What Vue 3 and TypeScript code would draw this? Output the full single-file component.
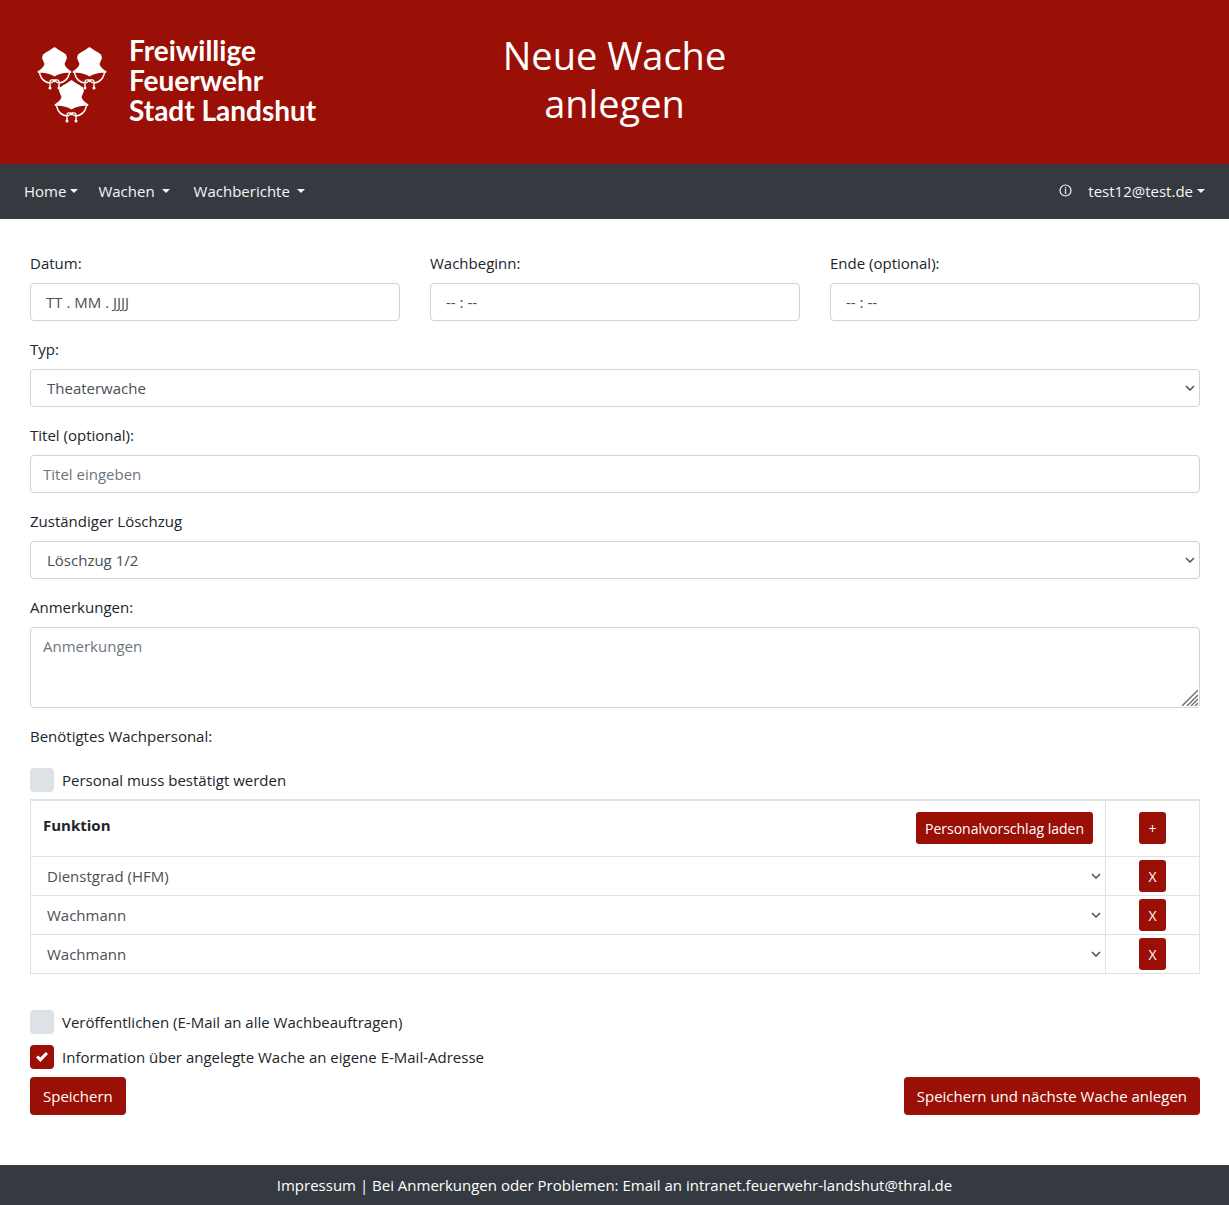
<script setup lang="ts">
import { reactive, ref } from 'vue'

interface NavEntry {
  label: string
  spaced: boolean
}

const navEntries: NavEntry[] = [
  { label: 'Home', spaced: false },
  { label: 'Wachen', spaced: true },
  { label: 'Wachberichte', spaced: true },
]

const types = ['Theaterwache', 'Brandwache', 'Sonstige']
const units = ['Löschzug 1/2', 'Löschzug 3', 'Löschzug 4']
const roles = ['Dienstgrad (HFM)', 'Wachmann']

const form = reactive({
  date: '',
  start: '',
  end: '',
  type: types[0],
  title: '',
  unit: units[0],
  notes: '',
  confirm: false,
  publish: false,
  inform: true,
})

const staff = ref<string[]>(['Dienstgrad (HFM)', 'Wachmann', 'Wachmann'])

function addRow() {
  staff.value.push('Wachmann')
}
function removeRow(index: number) {
  staff.value.splice(index, 1)
}
function loadProposal() {
  staff.value = ['Dienstgrad (HFM)', 'Wachmann', 'Wachmann']
}
</script>

<template>
  <div class="page">
    <header class="banner">
      <div class="brand">
        <svg class="emblem" width="70" height="78" viewBox="0 0 70 78" aria-hidden="true">
          <defs>
            <g id="helmet">
              <path
                d="M16.500 0 C19 2 24 4.500 28 7.500 L29 11 L26.500 17 C27 20 30 22 33.500 24.500 L33 26 Q24 25 16.500 29.500 Q9 25 0 26 L-0.500 24.500 C3 22 6 20 6.500 17 L4 11 L5 7.500 C9 4.500 14 2 16.500 0 Z"
                fill="#fff"
              />
              <path
                d="M1.500 26 C3 32 7 35.500 12 36 M31.500 26 C30 32 26 35.500 21 36 M12 41 V35 C12 32.500 15 32 16.500 34.500 C18 32 21 32.500 21 35 V41 M13 36 L18 32.500 M20 36 L15 32.500"
                fill="none"
                stroke="#fff"
                stroke-width="1.400"
              />
              <circle cx="12" cy="41" r="1.500" fill="#fff" />
              <circle cx="21" cy="41" r="1.500" fill="#fff" />
            </g>
          </defs>
          <use href="#helmet" x="1" y="1" />
          <use href="#helmet" x="36" y="1" />
          <use href="#helmet" x="18" y="34" />
        </svg>
        <div class="brand-name">
          <span>Freiwillige</span>
          <span>Feuerwehr</span>
          <span>Stadt Landshut</span>
        </div>
      </div>
      <h1>Neue Wache anlegen</h1>
      <div></div>
    </header>

    <nav class="navbar">
      <div class="nav-main">
        <a v-for="entry in navEntries" :key="entry.label" href="#" :class="{ spaced: entry.spaced }">
          {{ entry.label }}<i class="caret"></i>
        </a>
      </div>
      <div class="nav-user">
        <a href="#" class="info" aria-label="Info">
          <svg width="13" height="13" viewBox="0 0 13 13" fill="none" stroke="currentColor">
            <circle cx="6.500" cy="6.500" r="5.500" stroke-width="1.200" />
            <path d="M6.500 3 V4.200 M6.500 5 V10" stroke-width="1.200" />
          </svg>
        </a>
        <a href="#">test12@test.de<i class="caret"></i></a>
      </div>
    </nav>

    <main>
      <form @submit.prevent>
        <div class="columns">
          <div class="group">
            <label for="date">Datum:</label>
            <input id="date" v-model="form.date" class="control time" type="text" placeholder="TT . MM . JJJJ" />
          </div>
          <div class="group">
            <label for="start">Wachbeginn:</label>
            <input id="start" v-model="form.start" class="control time" type="text" placeholder="-- : --" />
          </div>
          <div class="group">
            <label for="end">Ende (optional):</label>
            <input id="end" v-model="form.end" class="control time" type="text" placeholder="-- : --" />
          </div>
        </div>

        <div class="group">
          <label for="type">Typ:</label>
          <select id="type" v-model="form.type" class="control">
            <option v-for="t in types" :key="t">{{ t }}</option>
          </select>
        </div>

        <div class="group">
          <label for="title">Titel (optional):</label>
          <input id="title" v-model="form.title" class="control" type="text" placeholder="Titel eingeben" />
        </div>

        <div class="group">
          <label for="unit">Zuständiger Löschzug</label>
          <select id="unit" v-model="form.unit" class="control">
            <option v-for="u in units" :key="u">{{ u }}</option>
          </select>
        </div>

        <div class="group">
          <label for="notes">Anmerkungen:</label>
          <div class="notes">
            <textarea id="notes" v-model="form.notes" class="control" placeholder="Anmerkungen"></textarea>
            <svg class="grip" width="16" height="16" viewBox="0 0 16 16" aria-hidden="true">
              <path d="M0 16 L16 0 M5 16 L16 5 M9 16 L16 9 M13 16 L16 13" stroke="#6b6b6b" stroke-width="1.400" />
            </svg>
          </div>
        </div>

        <p class="caption">Benötigtes Wachpersonal:</p>

        <label class="check">
          <input v-model="form.confirm" type="checkbox" />
          <span>Personal muss bestätigt werden</span>
        </label>

        <table>
          <thead>
            <tr>
              <th>
                <div class="head">
                  <span>Funktion</span>
                  <button type="button" class="btn small" @click="loadProposal">Personalvorschlag laden</button>
                </div>
              </th>
              <th class="action">
                <button type="button" class="btn small" @click="addRow">+</button>
              </th>
            </tr>
          </thead>
          <tbody>
            <tr v-for="(role, i) in staff" :key="i">
              <td>
                <select v-model="staff[i]" class="control plain" aria-label="Funktion">
                  <option v-for="r in roles" :key="r">{{ r }}</option>
                </select>
              </td>
              <td class="action">
                <button type="button" class="btn small" @click="removeRow(i)">X</button>
              </td>
            </tr>
          </tbody>
        </table>

        <div class="options">
          <label class="check">
            <input v-model="form.publish" type="checkbox" />
            <span>Veröffentlichen (E-Mail an alle Wachbeauftragen)</span>
          </label>
          <label class="check">
            <input v-model="form.inform" type="checkbox" />
            <span>Information über angelegte Wache an eigene E-Mail-Adresse</span>
          </label>
        </div>

        <div class="buttons">
          <button type="submit" class="btn">Speichern</button>
          <button type="submit" class="btn">Speichern und nächste Wache anlegen</button>
        </div>
      </form>
    </main>

    <footer>
      <a href="#">Impressum</a> | Bei Anmerkungen oder Problemen: Email an
      <a href="mailto:intranet.feuerwehr-landshut@thral.de">intranet.feuerwehr-landshut@thral.de</a>
    </footer>
  </div>
</template>

<style>
body {
  margin: 0;
  background: #fff;
}
</style>

<style scoped>
* {
  box-sizing: border-box;
}
.page {
  display: flex;
  flex-direction: column;
  min-height: 100vh;
  color: #212529;
  font: 15px/24px 'Segoe UI', 'Open Sans', 'Noto Sans', sans-serif;
}
a {
  color: inherit;
  text-decoration: none;
}
.banner {
  display: grid;
  grid-template-columns: 1fr 1fr 1fr;
  align-items: center;
  height: 164px;
  background: #9b1006;
  color: #fff;
}
.brand {
  display: flex;
  align-items: center;
  gap: 22px;
  padding-left: 37px;
}
.emblem {
  flex: none;
  margin-top: 6px;
}
.brand-name {
  display: flex;
  flex-direction: column;
  padding-bottom: 4px;
  font: 700 28px/30px Lato, sans-serif;
  white-space: nowrap;
}
h1 {
  margin: 0;
  padding: 0 60px 6px;
  font-size: 38px;
  font-weight: 400;
  line-height: 48px;
  text-align: center;
}
.navbar {
  display: flex;
  justify-content: space-between;
  align-items: center;
  height: 55px;
  padding: 0 24px 2px;
  background: #343a40;
  color: #f4f5f6;
}
.nav-main {
  display: flex;
  gap: 20px;
}
.nav-main .spaced + .spaced {
  margin-left: 4px;
}
.nav-user {
  display: flex;
  align-items: center;
  gap: 16px;
}
.info {
  display: flex;
}
.caret {
  display: inline-block;
  margin-left: 4px;
  vertical-align: 4px;
  border: 4px solid transparent;
  border-top-color: currentColor;
  border-bottom: 0;
}
.spaced .caret {
  margin-left: 7px;
}
main {
  flex: 1;
  padding: 32px 29px 50px 30px;
}
.columns {
  display: grid;
  grid-template-columns: repeat(3, 1fr);
  gap: 30px;
}
.group {
  margin-bottom: 16px;
}
.group > label {
  display: block;
  margin-bottom: 8px;
}
.control {
  display: block;
  width: 100%;
  height: 38px;
  margin: 0;
  padding: 6px 12px;
  border: 1px solid #ced4da;
  border-radius: 4px;
  background: #fff;
  color: #495057;
  font: inherit;
}
.control::placeholder {
  color: #6c757d;
  opacity: 1;
}
.time {
  padding: 6px 15px;
}
.time::placeholder {
  color: #495057;
}
select.control {
  appearance: none;
  padding: 6px 16px;
  background: #fff
    url("data:image/svg+xml,%3Csvg xmlns='http://www.w3.org/2000/svg' width='10' height='6' fill='none' stroke='%23495057' stroke-width='1.500'%3E%3Cpath d='M1 1l4 4 4-4'/%3E%3C/svg%3E")
    no-repeat right 4px center;
}
.notes {
  position: relative;
}
.notes textarea {
  height: 81px;
  resize: none;
}
.grip {
  position: absolute;
  right: 2px;
  bottom: 2px;
}
.caption {
  margin: 0 0 20px;
}
.check {
  display: flex;
  align-items: center;
  gap: 8px;
  width: fit-content;
}
.check input {
  appearance: none;
  display: grid;
  place-items: center;
  width: 24px;
  height: 24px;
  margin: 0;
  border-radius: 4px;
  background: #dee2e6;
}
.check input:checked {
  background: #9b1006;
}
.check input:checked::before {
  content: '';
  width: 12px;
  height: 10px;
  background: #fff;
  clip-path: polygon(0 54%, 17% 34%, 36% 56%, 82% 0, 100% 20%, 37% 100%);
}
table {
  width: 100%;
  margin-top: 7px;
  border-collapse: collapse;
}
th,
td {
  border: 1px solid #dee2e6;
  padding: 0;
}
th {
  padding: 11px 12px 12px;
  border-top-width: 2px;
  text-align: left;
}
.head {
  display: flex;
  justify-content: space-between;
  align-items: flex-start;
  line-height: 26px;
}
.action {
  width: 94px;
  text-align: center;
  line-height: 0;
}
select.plain {
  padding: 6px 16px;
  border: 0;
  border-radius: 0;
}
.options {
  display: grid;
  gap: 11px;
  margin: 36px 0 8px;
}
.buttons {
  display: flex;
  justify-content: space-between;
}
.btn {
  margin: 0;
  padding: 7px 13px;
  border: 0;
  border-radius: 4px;
  background: #9b1006;
  color: #fff;
  font: inherit;
}
.btn.small {
  height: 32px;
  padding: 0 9px;
  border-radius: 3px;
  font-size: 14px;
  font-weight: 400;
  line-height: 21px;
}
footer {
  height: 40px;
  padding: 8px;
  background: #343a40;
  color: #fff;
  text-align: center;
}
</style>
